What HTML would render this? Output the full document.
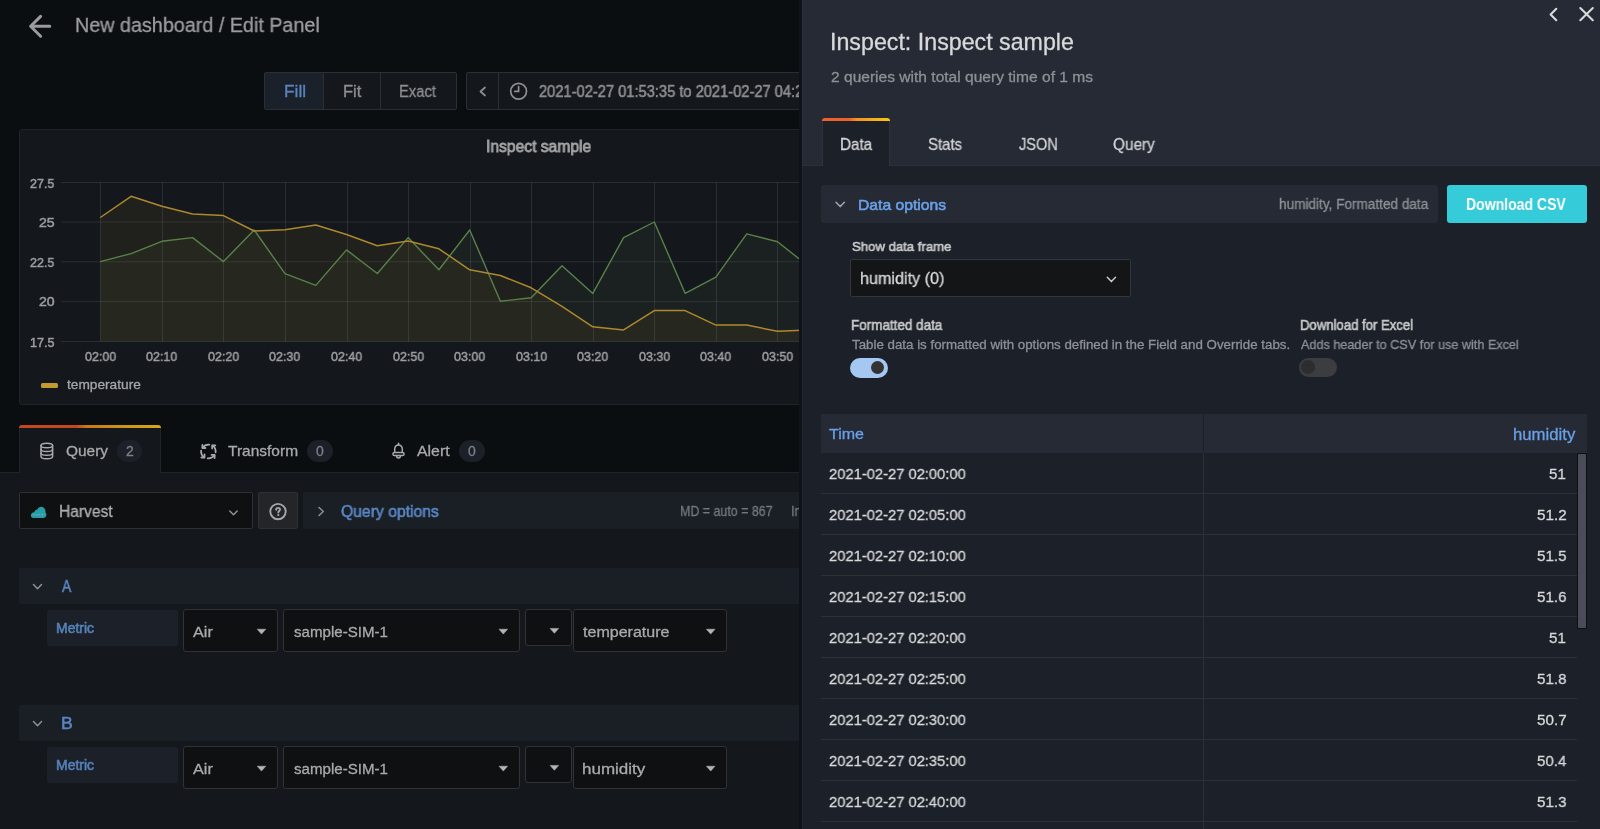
<!DOCTYPE html>
<html><head><meta charset="utf-8"><title>Inspect sample</title>
<style>
html,body{margin:0;padding:0;}
body{width:1600px;height:829px;overflow:hidden;position:relative;background:#0b0e11;font-family:"Liberation Sans",sans-serif;}
.b{position:absolute;}
.s{position:absolute;overflow:hidden;}
.t{position:absolute;white-space:pre;transform-origin:0 0;will-change:transform;}
#left{position:absolute;left:0;top:0;width:802px;height:829px;overflow:hidden;}
</style></head><body>
<div id="left">
<svg class="s" style="left:0;top:0" width="802" height="829" viewBox="0 0 802 829"><g fill="none" stroke="#9a9b9d" stroke-width="3" stroke-linecap="round" stroke-linejoin="round"><path d="M49.8 26.3H31M40.6 16.4L30.6 26.3L40.6 36.2"/></g></svg>
<div class="b" style="left:264px;top:72px;width:193px;height:38px;background:#14181c;border:1px solid #2b2e33;border-radius:2px;box-sizing:border-box;"></div>
<div class="b" style="left:265px;top:73px;width:58px;height:36px;background:#1b212b;border-radius:0px;"></div>
<div class="b" style="left:323px;top:73px;width:1px;height:36px;background:#2b2e33;border-radius:0px;"></div>
<div class="b" style="left:380px;top:73px;width:1px;height:36px;background:#2b2e33;border-radius:0px;"></div>
<div class="b" style="left:466px;top:72px;width:400px;height:38px;background:#14181c;border:1px solid #2b2e33;border-radius:2px;box-sizing:border-box;"></div>
<div class="b" style="left:498px;top:73px;width:1px;height:36px;background:#2b2e33;border-radius:0px;"></div>
<svg class="s" style="left:470px;top:80px" width="60" height="24" viewBox="470 80 60 24"><g fill="none" stroke="#8e8f92" stroke-width="1.7" stroke-linecap="round" stroke-linejoin="round"><path d="M485 87.5L480.5 91.5L485 95.5"/><circle cx="518.6" cy="91.2" r="7.9"/><path d="M518.6 86.6V91.4H514.8"/></g></svg>
<div class="b" style="left:19px;top:129px;width:900px;height:276px;background:#14181c;border:1px solid #202328;border-radius:3px;box-sizing:border-box;"></div>
<svg class="s" style="left:0;top:0" width="802" height="829" viewBox="0 0 802 829"><g stroke="rgba(240,250,255,0.10)" stroke-width="1"><path d="M61 182.5H802"/><path d="M61 222H802"/><path d="M61 261.8H802"/><path d="M61 301.6H802"/><path d="M61 341.5H802"/><path d="M100.5 182.5V341.5"/><path d="M162.5 182.5V341.5"/><path d="M223.5 182.5V341.5"/><path d="M285.5 182.5V341.5"/><path d="M347.5 182.5V341.5"/><path d="M408.5 182.5V341.5"/><path d="M470.5 182.5V341.5"/><path d="M531.5 182.5V341.5"/><path d="M593.5 182.5V341.5"/><path d="M654.5 182.5V341.5"/><path d="M716.5 182.5V341.5"/><path d="M777.5 182.5V341.5"/></g><path d="M100.3,341.5 L100.3,261.6 131.1,253.6 161.9,241.3 192.6,237.6 223.4,261.6 254.2,230.0 285.0,273.7 315.8,285.4 346.5,249.9 377.3,273.5 408.1,237.6 438.9,269.8 469.7,230.0 500.4,301.2 531.2,297.7 562.0,265.7 592.8,293.4 623.6,237.6 654.3,222.0 685.1,293.3 715.9,277.1 746.7,233.9 777.5,241.7 808.2,266.0 839.0,280.0 L839.0,341.5 Z" fill="rgb(120,150,90)" fill-opacity="0.07"/><path d="M100.3,341.5 L100.3,217.5 131.1,196.3 161.9,206.2 192.6,214.0 223.4,215.6 254.2,231.0 285.0,229.8 315.8,225.0 346.5,234.5 377.3,245.8 408.1,241.0 438.9,248.8 469.7,269.8 500.4,275.5 531.2,287.8 562.0,306.3 592.8,326.8 623.6,329.9 654.3,310.6 685.1,310.6 715.9,325.1 746.7,325.1 777.5,331.3 808.2,330.0 839.0,329.0 L839.0,341.5 Z" fill="rgb(190,140,40)" fill-opacity="0.075"/><polyline points="100.3,261.6 131.1,253.6 161.9,241.3 192.6,237.6 223.4,261.6 254.2,230.0 285.0,273.7 315.8,285.4 346.5,249.9 377.3,273.5 408.1,237.6 438.9,269.8 469.7,230.0 500.4,301.2 531.2,297.7 562.0,265.7 592.8,293.4 623.6,237.6 654.3,222.0 685.1,293.3 715.9,277.1 746.7,233.9 777.5,241.7 808.2,266.0 839.0,280.0" fill="none" stroke="#5a8049" stroke-width="1.4" stroke-linejoin="round"/><polyline points="100.3,217.5 131.1,196.3 161.9,206.2 192.6,214.0 223.4,215.6 254.2,231.0 285.0,229.8 315.8,225.0 346.5,234.5 377.3,245.8 408.1,241.0 438.9,248.8 469.7,269.8 500.4,275.5 531.2,287.8 562.0,306.3 592.8,326.8 623.6,329.9 654.3,310.6 685.1,310.6 715.9,325.1 746.7,325.1 777.5,331.3 808.2,330.0 839.0,329.0" fill="none" stroke="#ad882d" stroke-width="1.5" stroke-linejoin="round"/></svg>
<div class="b" style="left:41px;top:383px;width:17px;height:5px;background:#c39a2e;border-radius:1.5px;"></div>
<div class="b" style="left:0px;top:472px;width:802px;height:1px;background:#202328;border-radius:0px;"></div>
<div class="b" style="left:0px;top:473px;width:802px;height:356px;background:#14181c;border-radius:0px;"></div>
<div class="b" style="left:19px;top:425px;width:142px;height:48px;background:#14181c;border-radius:0px;border-left:1px solid #202328;border-right:1px solid #202328;box-sizing:border-box;border-radius:3px 3px 0 0;"></div>
<div class="b" style="left:19px;top:425px;width:142px;height:3px;background:transparent;border-radius:0px;background:linear-gradient(90deg,#c3481f 0%,#c3481f 40%,#c97a18 48%,#cc9416 72%,#d6a913 100%);border-radius:3px 3px 0 0;"></div>
<svg class="s" style="left:0;top:430px" width="420" height="40" viewBox="0 430 420 40"><g fill="none" stroke="#a8a9ab" stroke-width="1.5" stroke-linecap="round" stroke-linejoin="round"><ellipse cx="46.8" cy="445.5" rx="5.8" ry="2.3"/><path d="M41 445.5V456.5C41 457.8 43.6 458.8 46.8 458.8C50 458.8 52.6 457.8 52.6 456.5V445.5"/><path d="M41 449.2C41 450.5 43.6 451.5 46.8 451.5C50 451.5 52.6 450.5 52.6 449.2"/><path d="M41 452.9C41 454.2 43.6 455.2 46.8 455.2C50 455.2 52.6 454.2 52.6 452.9"/></g><g fill="none" stroke="#a8a9ab" stroke-width="1.8" stroke-linecap="round" stroke-linejoin="round"><path d="M209.3 444.6C206.3 444.4 204 445.6 202.6 447.6"/><path d="M202.4 444.9V448H205.4"/><path d="M215.6 452.3C215.8 449.3 214.6 447 212.6 445.6"/><path d="M215.3 445.4H212.2V448.4"/><path d="M207.7 458.3C210.7 458.5 213 457.3 214.4 455.3"/><path d="M214.6 458V454.9H211.6"/><path d="M201.1 450.6C200.9 453.6 202.1 455.9 204.1 457.3"/><path d="M201.4 457.5H204.5V454.5"/></g><g fill="none" stroke="#a8a9ab" stroke-width="1.5" stroke-linecap="round" stroke-linejoin="round"><path d="M394.7 452.3V449.2C394.7 446.7 396.4 444.9 398.5 444.9C400.6 444.9 402.3 446.7 402.3 449.2V452.3"/><rect x="393" y="452.4" width="11" height="3.2" rx="1.4"/><path d="M396.6 455.8C396.6 457 397.4 457.9 398.5 457.9C399.6 457.9 400.4 457 400.4 455.8"/><path d="M398.5 443.3V444.9"/></g></svg>
<div class="b" style="left:117px;top:440px;width:25px;height:22px;background:#1c2129;border-radius:11px;"></div>
<div class="b" style="left:307px;top:440px;width:26px;height:22px;background:#1c2129;border-radius:11px;"></div>
<div class="b" style="left:459px;top:440px;width:26px;height:22px;background:#1c2129;border-radius:11px;"></div>
<div class="b" style="left:19px;top:492px;width:234px;height:37px;background:#0f1011;border:1px solid #2e3033;border-radius:2px;box-sizing:border-box;"></div>
<div class="b" style="left:258px;top:492px;width:40px;height:37px;background:#242528;border:1px solid #2e3033;border-radius:2px;box-sizing:border-box;"></div>
<div class="b" style="left:303px;top:492px;width:520px;height:37px;background:#1a1f26;border-radius:2px;"></div>
<div class="b" style="left:19px;top:568px;width:800px;height:36px;background:#1a1f26;border-radius:2px;"></div>
<div class="b" style="left:47px;top:610px;width:131px;height:36px;background:#1b2029;border-radius:2px;"></div>
<div class="b" style="left:183px;top:609px;width:95px;height:43px;background:#0f1011;border:1px solid #303236;border-radius:3px;box-sizing:border-box;"></div>
<div class="b" style="left:283px;top:609px;width:237px;height:43px;background:#0f1011;border:1px solid #303236;border-radius:3px;box-sizing:border-box;"></div>
<div class="b" style="left:525px;top:609px;width:47px;height:37px;background:#0f1011;border:1px solid #303236;border-radius:3px;box-sizing:border-box;"></div>
<div class="b" style="left:573px;top:609px;width:154px;height:43px;background:#0f1011;border:1px solid #303236;border-radius:3px;box-sizing:border-box;"></div>
<div class="b" style="left:19px;top:705px;width:800px;height:36px;background:#1a1f26;border-radius:2px;"></div>
<div class="b" style="left:47px;top:747px;width:131px;height:36px;background:#1b2029;border-radius:2px;"></div>
<div class="b" style="left:183px;top:746px;width:95px;height:43px;background:#0f1011;border:1px solid #303236;border-radius:3px;box-sizing:border-box;"></div>
<div class="b" style="left:283px;top:746px;width:237px;height:43px;background:#0f1011;border:1px solid #303236;border-radius:3px;box-sizing:border-box;"></div>
<div class="b" style="left:525px;top:746px;width:47px;height:37px;background:#0f1011;border:1px solid #303236;border-radius:3px;box-sizing:border-box;"></div>
<div class="b" style="left:573px;top:746px;width:154px;height:43px;background:#0f1011;border:1px solid #303236;border-radius:3px;box-sizing:border-box;"></div>
<svg class="s" style="left:0;top:480px" width="802" height="349" viewBox="0 480 802 349"><path d="M33.3 518C31.8 518 30.9 516.9 30.9 515.5C30.9 513.7 32.3 512.3 34 512.3H34.3C34.6 510.6 35.8 509.5 37.3 509.4C38.1 507.7 39.6 506.7 41.2 506.7C43.7 506.7 45.5 508.8 45.5 511.4L45.4 512.3C46.1 512.9 46.4 513.7 46.4 514.6C46.4 516.5 45 518 43.2 518Z" fill="#2a9ca5"/><path d="M33 514.8H44.5" stroke="#78bfc4" stroke-width="0.9" stroke-dasharray="1.6 1.2"/><g fill="none" stroke="#8e8f92" stroke-width="1.5" stroke-linecap="round" stroke-linejoin="round"><path d="M229.8 511L233.5 514.7L237.2 511"/><path d="M319 507.5L323.3 511.5L319 515.5"/><path d="M33.5 584.5L37.5 588.8L41.5 584.5"/><path d="M33.5 721.5L37.5 725.8L41.5 721.5"/></g><g fill="none" stroke="#a5a6a8" stroke-width="1.9" stroke-linecap="round"><circle cx="278" cy="511.6" r="7.7"/><path d="M276.1 509.7C276.2 508.6 277 507.9 278.1 507.9C279.2 507.9 280 508.6 280 509.6C280 510.9 278.3 511 278.3 512.5"/></g><circle cx="278.3" cy="515" r="1.1" fill="#a5a6a8"/><path d="M257.2 629.2H265.8L261.5 634.1Z" fill="#b4b5b7" stroke="#b4b5b7" stroke-width="0.5" stroke-linejoin="round"/><path d="M499.0 629.2H507.6L503.3 634.1Z" fill="#b4b5b7" stroke="#b4b5b7" stroke-width="0.5" stroke-linejoin="round"/><path d="M550.1 628.4H558.6999999999999L554.4 633.3Z" fill="#b4b5b7" stroke="#b4b5b7" stroke-width="0.5" stroke-linejoin="round"/><path d="M706.4000000000001 629.2H715.0L710.7 634.1Z" fill="#b4b5b7" stroke="#b4b5b7" stroke-width="0.5" stroke-linejoin="round"/><path d="M257.2 766.2H265.8L261.5 771.1Z" fill="#b4b5b7" stroke="#b4b5b7" stroke-width="0.5" stroke-linejoin="round"/><path d="M499.0 766.2H507.6L503.3 771.1Z" fill="#b4b5b7" stroke="#b4b5b7" stroke-width="0.5" stroke-linejoin="round"/><path d="M550.1 765.4H558.6999999999999L554.4 770.3Z" fill="#b4b5b7" stroke="#b4b5b7" stroke-width="0.5" stroke-linejoin="round"/><path d="M706.4000000000001 766.2H715.0L710.7 771.1Z" fill="#b4b5b7" stroke="#b4b5b7" stroke-width="0.5" stroke-linejoin="round"/></svg>
<div class="t" style="left:75.22px;top:14.74px;font-size:20.00px;line-height:20.00px;color:#9c9d9f;-webkit-text-stroke:0.3px #9c9d9f;transform:scaleX(0.9874);">New dashboard / Edit Panel</div>
<div class="t" style="left:283.54px;top:83.87px;font-size:15.80px;line-height:15.80px;color:#5a84bd;-webkit-text-stroke:0.3px #5a84bd;transform:scaleX(1.0925);">Fill</div>
<div class="t" style="left:342.68px;top:83.87px;font-size:15.80px;line-height:15.80px;color:#8e8f92;-webkit-text-stroke:0.3px #8e8f92;transform:scaleX(1.0413);">Fit</div>
<div class="t" style="left:399.32px;top:83.87px;font-size:15.80px;line-height:15.80px;color:#8e8f92;-webkit-text-stroke:0.3px #8e8f92;transform:scaleX(0.9348);">Exact</div>
<div class="t" style="left:539.07px;top:83.89px;font-size:15.94px;line-height:15.94px;color:#8c8d90;-webkit-text-stroke:0.6px #8c8d90;transform:scaleX(0.9206);">2021-02-27 01:53:35 to 2021-02-27 04:25:20</div>
<div class="t" style="left:485.51px;top:138.90px;font-size:16.78px;line-height:16.78px;color:#a3a4a6;-webkit-text-stroke:0.8px #a3a4a6;transform:scaleX(0.9326);">Inspect sample</div>
<div class="t" style="left:30.18px;top:177.66px;font-size:12.59px;line-height:12.59px;color:#9d9ea1;-webkit-text-stroke:0.45px #9d9ea1;transform:scaleX(0.9908);">27.5</div>
<div class="t" style="left:38.79px;top:217.16px;font-size:12.59px;line-height:12.59px;color:#9d9ea1;-webkit-text-stroke:0.45px #9d9ea1;transform:scaleX(1.1226);">25</div>
<div class="t" style="left:30.18px;top:256.80px;font-size:12.59px;line-height:12.59px;color:#9d9ea1;-webkit-text-stroke:0.45px #9d9ea1;transform:scaleX(0.9908);">22.5</div>
<div class="t" style="left:38.79px;top:296.44px;font-size:12.59px;line-height:12.59px;color:#9d9ea1;-webkit-text-stroke:0.45px #9d9ea1;transform:scaleX(1.1226);">20</div>
<div class="t" style="left:29.92px;top:336.66px;font-size:12.59px;line-height:12.59px;color:#9d9ea1;-webkit-text-stroke:0.45px #9d9ea1;">17.5</div>
<div class="t" style="left:84.73px;top:351.44px;font-size:12.59px;line-height:12.59px;color:#9d9ea1;-webkit-text-stroke:0.45px #9d9ea1;transform:scaleX(0.9913);">02:00</div>
<div class="t" style="left:146.29px;top:351.44px;font-size:12.59px;line-height:12.59px;color:#9d9ea1;-webkit-text-stroke:0.45px #9d9ea1;transform:scaleX(0.9913);">02:10</div>
<div class="t" style="left:207.85px;top:351.44px;font-size:12.59px;line-height:12.59px;color:#9d9ea1;-webkit-text-stroke:0.45px #9d9ea1;transform:scaleX(0.9913);">02:20</div>
<div class="t" style="left:269.41px;top:351.44px;font-size:12.59px;line-height:12.59px;color:#9d9ea1;-webkit-text-stroke:0.45px #9d9ea1;transform:scaleX(0.9913);">02:30</div>
<div class="t" style="left:330.97px;top:351.44px;font-size:12.59px;line-height:12.59px;color:#9d9ea1;-webkit-text-stroke:0.45px #9d9ea1;transform:scaleX(0.9913);">02:40</div>
<div class="t" style="left:392.53px;top:351.44px;font-size:12.59px;line-height:12.59px;color:#9d9ea1;-webkit-text-stroke:0.45px #9d9ea1;transform:scaleX(0.9913);">02:50</div>
<div class="t" style="left:454.09px;top:351.44px;font-size:12.59px;line-height:12.59px;color:#9d9ea1;-webkit-text-stroke:0.45px #9d9ea1;transform:scaleX(0.9913);">03:00</div>
<div class="t" style="left:515.65px;top:351.44px;font-size:12.59px;line-height:12.59px;color:#9d9ea1;-webkit-text-stroke:0.45px #9d9ea1;transform:scaleX(0.9913);">03:10</div>
<div class="t" style="left:577.21px;top:351.44px;font-size:12.59px;line-height:12.59px;color:#9d9ea1;-webkit-text-stroke:0.45px #9d9ea1;transform:scaleX(0.9913);">03:20</div>
<div class="t" style="left:638.77px;top:351.44px;font-size:12.59px;line-height:12.59px;color:#9d9ea1;-webkit-text-stroke:0.45px #9d9ea1;transform:scaleX(0.9913);">03:30</div>
<div class="t" style="left:700.33px;top:351.44px;font-size:12.59px;line-height:12.59px;color:#9d9ea1;-webkit-text-stroke:0.45px #9d9ea1;transform:scaleX(0.9913);">03:40</div>
<div class="t" style="left:761.89px;top:351.44px;font-size:12.59px;line-height:12.59px;color:#9d9ea1;-webkit-text-stroke:0.45px #9d9ea1;transform:scaleX(0.9913);">03:50</div>
<div class="t" style="left:67.28px;top:378.19px;font-size:13.60px;line-height:13.60px;color:#a5a6a8;-webkit-text-stroke:0.3px #a5a6a8;transform:scaleX(1.0069);">temperature</div>
<div class="t" style="left:66.18px;top:443.00px;font-size:15.38px;line-height:15.38px;color:#a8a9ab;-webkit-text-stroke:0.3px #a8a9ab;transform:scaleX(1.0054);">Query</div>
<div class="t" style="left:125.58px;top:444.38px;font-size:13.99px;line-height:13.99px;color:#7d7f83;-webkit-text-stroke:0.3px #7d7f83;">2</div>
<div class="t" style="left:227.65px;top:443.00px;font-size:15.38px;line-height:15.38px;color:#a8a9ab;-webkit-text-stroke:0.3px #a8a9ab;transform:scaleX(1.0081);">Transform</div>
<div class="t" style="left:316.15px;top:444.38px;font-size:13.99px;line-height:13.99px;color:#7d7f83;-webkit-text-stroke:0.3px #7d7f83;">0</div>
<div class="t" style="left:417.00px;top:443.00px;font-size:15.38px;line-height:15.38px;color:#a8a9ab;-webkit-text-stroke:0.3px #a8a9ab;transform:scaleX(1.0326);">Alert</div>
<div class="t" style="left:468.15px;top:444.38px;font-size:13.99px;line-height:13.99px;color:#7d7f83;-webkit-text-stroke:0.3px #7d7f83;">0</div>
<div class="t" style="left:59.21px;top:502.71px;font-size:16.22px;line-height:16.22px;color:#aeafb1;-webkit-text-stroke:0.3px #aeafb1;transform:scaleX(0.9610);">Harvest</div>
<div class="t" style="left:340.67px;top:503.43px;font-size:16.22px;line-height:16.22px;color:#5a86c2;-webkit-text-stroke:0.6px #5a86c2;transform:scaleX(0.9693);">Query options</div>
<div class="t" style="left:680.01px;top:505.22px;font-size:13.71px;line-height:13.71px;color:#75787d;-webkit-text-stroke:0.3px #75787d;transform:scaleX(0.9066);">MD = auto = 867</div>
<div class="t" style="left:790.77px;top:505.22px;font-size:13.71px;line-height:13.71px;color:#75787d;-webkit-text-stroke:0.3px #75787d;transform:scaleX(0.93);">Interval = 2s</div>
<div class="t" style="left:62.00px;top:578.87px;font-size:15.80px;line-height:15.80px;color:#5a86c2;-webkit-text-stroke:0.5px #5a86c2;transform:scaleX(0.8736);">A</div>
<div class="t" style="left:55.76px;top:621.98px;font-size:13.85px;line-height:13.85px;color:#5580b8;-webkit-text-stroke:0.6px #5580b8;transform:scaleX(1.0108);">Metric</div>
<div class="t" style="left:193.08px;top:624.59px;font-size:14.69px;line-height:14.69px;color:#a9aaac;-webkit-text-stroke:0.3px #a9aaac;transform:scaleX(1.1038);">Air</div>
<div class="t" style="left:294.04px;top:624.59px;font-size:14.69px;line-height:14.69px;color:#a9aaac;-webkit-text-stroke:0.3px #a9aaac;transform:scaleX(1.0274);">sample-SIM-1</div>
<div class="t" style="left:582.88px;top:624.16px;font-size:15.20px;line-height:15.20px;color:#a9aaac;-webkit-text-stroke:0.3px #a9aaac;transform:scaleX(1.0560);">temperature</div>
<div class="t" style="left:60.59px;top:715.87px;font-size:15.80px;line-height:15.80px;color:#5a86c2;-webkit-text-stroke:0.5px #5a86c2;transform:scaleX(1.1132);">B</div>
<div class="t" style="left:55.76px;top:758.98px;font-size:13.85px;line-height:13.85px;color:#5580b8;-webkit-text-stroke:0.6px #5580b8;transform:scaleX(1.0108);">Metric</div>
<div class="t" style="left:193.08px;top:761.59px;font-size:14.69px;line-height:14.69px;color:#a9aaac;-webkit-text-stroke:0.3px #a9aaac;transform:scaleX(1.1038);">Air</div>
<div class="t" style="left:294.04px;top:761.59px;font-size:14.69px;line-height:14.69px;color:#a9aaac;-webkit-text-stroke:0.3px #a9aaac;transform:scaleX(1.0274);">sample-SIM-1</div>
<div class="t" style="left:582.02px;top:761.16px;font-size:15.20px;line-height:15.20px;color:#a9aaac;-webkit-text-stroke:0.3px #a9aaac;transform:scaleX(1.1187);">humidity</div>
</div>
<div class="b" style="left:799px;top:0px;width:3px;height:829px;background:#0f121a;border-radius:0px;"></div>
<div class="b" style="left:802px;top:0px;width:798px;height:829px;background:#1c2129;border-radius:0px;"></div>
<div class="b" style="left:802px;top:0px;width:798px;height:165px;background:#252a35;border-radius:0px;"></div>
<div class="b" style="left:802px;top:165px;width:798px;height:1px;background:#2b2f37;border-radius:0px;"></div>
<div class="b" style="left:802px;top:0px;width:1px;height:829px;background:rgba(255,255,255,0.025);border-radius:0px;"></div>
<svg class="s" style="left:1540px;top:0" width="60" height="30" viewBox="1540 0 60 30"><g fill="none" stroke="#d8d9da" stroke-width="2.1" stroke-linecap="round" stroke-linejoin="round"><path d="M1556.3 8.8L1550.6 14.5L1556.3 20.2"/><path d="M1580.3 8.1L1592.8 20.2M1592.8 8.1L1580.3 20.2"/></g></svg>
<div class="b" style="left:822px;top:118px;width:68px;height:48px;background:#1c2129;border-radius:0px;border-left:1px solid #30333a;border-right:1px solid #30333a;box-sizing:border-box;border-radius:3px 3px 0 0;"></div>
<div class="b" style="left:822px;top:118px;width:68px;height:3px;background:transparent;border-radius:0px;background:linear-gradient(90deg,#f0602a 0%,#f0602a 40%,#f5901f 50%,#f8a81a 72%,#fbc70c 100%);border-radius:3px 3px 0 0;"></div>
<div class="b" style="left:821px;top:185px;width:617px;height:38px;background:#252a35;border-radius:3px;"></div>
<svg class="s" style="left:830px;top:195px" width="20" height="20" viewBox="830 195 20 20"><path d="M836 202.3L840.2 206.6L844.4 202.3" fill="none" stroke="#a5a6a8" stroke-width="1.5" stroke-linecap="round" stroke-linejoin="round"/></svg>
<div class="b" style="left:1447px;top:185px;width:140px;height:38px;background:#35cbd9;border-radius:3px;"></div>
<div class="b" style="left:850px;top:259px;width:281px;height:38px;background:#141517;border:1px solid #33363a;border-radius:2px;box-sizing:border-box;"></div>
<svg class="s" style="left:1100px;top:270px" width="24" height="20" viewBox="1100 270 24 20"><path d="M1107.3 277.3L1111.4 281.6L1115.5 277.3" fill="none" stroke="#c8c9cb" stroke-width="1.5" stroke-linecap="round" stroke-linejoin="round"/></svg>
<div class="b" style="left:849.5px;top:358px;width:38px;height:19.5px;background:#a5c8f2;border-radius:10px;"></div>
<div class="b" style="left:871px;top:360.7px;width:13px;height:13px;background:#333333;border-radius:7px;"></div>
<div class="b" style="left:1299px;top:358px;width:38px;height:19px;background:#3c3d40;border-radius:10px;"></div>
<div class="b" style="left:1301.3px;top:360.3px;width:14px;height:14px;background:#2c2d2f;border-radius:7px;"></div>
<div class="b" style="left:821px;top:414px;width:766px;height:39px;background:#252a35;border-radius:0px;"></div>
<div class="b" style="left:1203px;top:414px;width:1px;height:39px;background:#1c2129;border-radius:0px;"></div>
<div class="b" style="left:1203px;top:453px;width:1px;height:376px;background:#2e3034;border-radius:0px;"></div>
<div class="b" style="left:821px;top:493px;width:756px;height:1px;background:#2e3034;border-radius:0px;"></div>
<div class="b" style="left:821px;top:534px;width:756px;height:1px;background:#2e3034;border-radius:0px;"></div>
<div class="b" style="left:821px;top:575px;width:756px;height:1px;background:#2e3034;border-radius:0px;"></div>
<div class="b" style="left:821px;top:616px;width:756px;height:1px;background:#2e3034;border-radius:0px;"></div>
<div class="b" style="left:821px;top:657px;width:756px;height:1px;background:#2e3034;border-radius:0px;"></div>
<div class="b" style="left:821px;top:698px;width:756px;height:1px;background:#2e3034;border-radius:0px;"></div>
<div class="b" style="left:821px;top:739px;width:756px;height:1px;background:#2e3034;border-radius:0px;"></div>
<div class="b" style="left:821px;top:780px;width:756px;height:1px;background:#2e3034;border-radius:0px;"></div>
<div class="b" style="left:821px;top:821px;width:756px;height:1px;background:#2e3034;border-radius:0px;"></div>
<div class="b" style="left:1577px;top:453px;width:10px;height:176px;background:#0e0f11;border-radius:2px;"></div>
<div class="b" style="left:1578px;top:454px;width:8px;height:174px;background:#4a4c58;border-radius:1px;"></div>
<div class="t" style="left:829.79px;top:31.46px;font-size:23.22px;line-height:23.22px;color:#d8d9da;-webkit-text-stroke:0.3px #d8d9da;">Inspect: Inspect sample</div>
<div class="t" style="left:830.84px;top:70.45px;font-size:14.69px;line-height:14.69px;color:#8e9094;-webkit-text-stroke:0.3px #8e9094;transform:scaleX(1.0592);">2 queries with total query time of 1 ms</div>
<div class="t" style="left:839.62px;top:136.76px;font-size:15.66px;line-height:15.66px;color:#d8d9da;-webkit-text-stroke:0.3px #d8d9da;transform:scaleX(0.9751);">Data</div>
<div class="t" style="left:927.52px;top:136.76px;font-size:15.66px;line-height:15.66px;color:#d0d1d3;-webkit-text-stroke:0.3px #d0d1d3;transform:scaleX(0.9567);">Stats</div>
<div class="t" style="left:1018.77px;top:136.76px;font-size:15.66px;line-height:15.66px;color:#d0d1d3;-webkit-text-stroke:0.3px #d0d1d3;transform:scaleX(0.9286);">JSON</div>
<div class="t" style="left:1112.81px;top:136.76px;font-size:15.66px;line-height:15.66px;color:#d0d1d3;-webkit-text-stroke:0.3px #d0d1d3;transform:scaleX(0.9803);">Query</div>
<div class="t" style="left:858.24px;top:197.00px;font-size:15.38px;line-height:15.38px;color:#6aa0e6;-webkit-text-stroke:0.6px #6aa0e6;transform:scaleX(1.0214);">Data options</div>
<div class="t" style="left:1278.64px;top:197.52px;font-size:13.85px;line-height:13.85px;color:#8e9096;-webkit-text-stroke:0.3px #8e9096;transform:scaleX(0.9812);">humidity, Formatted data</div>
<div class="t" style="left:1466.28px;top:196.11px;font-size:16.08px;line-height:16.08px;color:#ffffff;font-weight:bold;transform:scaleX(0.8725);">Download CSV</div>
<div class="t" style="left:852.31px;top:239.62px;font-size:13.57px;line-height:13.57px;color:#c8c9cb;-webkit-text-stroke:0.6px #c8c9cb;transform:scaleX(0.9692);">Show data frame</div>
<div class="t" style="left:859.95px;top:271.49px;font-size:16.60px;line-height:16.60px;color:#d8d9da;-webkit-text-stroke:0.3px #d8d9da;transform:scaleX(0.9725);">humidity (0)</div>
<div class="t" style="left:850.96px;top:317.68px;font-size:13.99px;line-height:13.99px;color:#c8c9cb;-webkit-text-stroke:0.6px #c8c9cb;transform:scaleX(0.9629);">Formatted data</div>
<div class="t" style="left:851.73px;top:339.29px;font-size:12.87px;line-height:12.87px;color:#8e9096;-webkit-text-stroke:0.3px #8e9096;transform:scaleX(1.0354);">Table data is formatted with options defined in the Field and Override tabs.</div>
<div class="t" style="left:1300.49px;top:317.68px;font-size:13.99px;line-height:13.99px;color:#c8c9cb;-webkit-text-stroke:0.6px #c8c9cb;transform:scaleX(0.9392);">Download for Excel</div>
<div class="t" style="left:1301.04px;top:339.07px;font-size:12.87px;line-height:12.87px;color:#8e9096;-webkit-text-stroke:0.3px #8e9096;transform:scaleX(0.9827);">Adds header to CSV for use with Excel</div>
<div class="t" style="left:829.06px;top:426.04px;font-size:15.24px;line-height:15.24px;color:#6aa0e6;-webkit-text-stroke:0.3px #6aa0e6;transform:scaleX(1.0507);">Time</div>
<div class="t" style="left:1512.54px;top:426.54px;font-size:15.60px;line-height:15.60px;color:#6aa0e6;-webkit-text-stroke:0.3px #6aa0e6;transform:scaleX(1.0726);">humidity</div>
<div class="t" style="left:828.64px;top:465.54px;font-size:15.24px;line-height:15.24px;color:#d8d9da;-webkit-text-stroke:0.3px #d8d9da;transform:scaleX(0.9669);">2021-02-27 02:00:00</div>
<div class="t" style="left:1549.10px;top:465.54px;font-size:15.24px;line-height:15.24px;color:#d8d9da;-webkit-text-stroke:0.3px #d8d9da;transform:scaleX(0.9908);">51</div>
<div class="t" style="left:828.88px;top:506.54px;font-size:15.24px;line-height:15.24px;color:#d8d9da;-webkit-text-stroke:0.3px #d8d9da;transform:scaleX(0.9669);">2021-02-27 02:05:00</div>
<div class="t" style="left:1537.09px;top:506.54px;font-size:15.24px;line-height:15.24px;color:#d8d9da;-webkit-text-stroke:0.3px #d8d9da;">51.2</div>
<div class="t" style="left:828.64px;top:547.54px;font-size:15.24px;line-height:15.24px;color:#d8d9da;-webkit-text-stroke:0.3px #d8d9da;transform:scaleX(0.9669);">2021-02-27 02:10:00</div>
<div class="t" style="left:1537.09px;top:547.54px;font-size:15.24px;line-height:15.24px;color:#d8d9da;-webkit-text-stroke:0.3px #d8d9da;transform:scaleX(0.9926);">51.5</div>
<div class="t" style="left:828.64px;top:588.54px;font-size:15.24px;line-height:15.24px;color:#d8d9da;-webkit-text-stroke:0.3px #d8d9da;transform:scaleX(0.9669);">2021-02-27 02:15:00</div>
<div class="t" style="left:1537.09px;top:588.54px;font-size:15.24px;line-height:15.24px;color:#d8d9da;-webkit-text-stroke:0.3px #d8d9da;transform:scaleX(0.9926);">51.6</div>
<div class="t" style="left:828.64px;top:629.54px;font-size:15.24px;line-height:15.24px;color:#d8d9da;-webkit-text-stroke:0.3px #d8d9da;transform:scaleX(0.9669);">2021-02-27 02:20:00</div>
<div class="t" style="left:1549.10px;top:629.54px;font-size:15.24px;line-height:15.24px;color:#d8d9da;-webkit-text-stroke:0.3px #d8d9da;transform:scaleX(0.9908);">51</div>
<div class="t" style="left:828.64px;top:670.54px;font-size:15.24px;line-height:15.24px;color:#d8d9da;-webkit-text-stroke:0.3px #d8d9da;transform:scaleX(0.9669);">2021-02-27 02:25:00</div>
<div class="t" style="left:1537.09px;top:670.54px;font-size:15.24px;line-height:15.24px;color:#d8d9da;-webkit-text-stroke:0.3px #d8d9da;transform:scaleX(0.9926);">51.8</div>
<div class="t" style="left:828.64px;top:711.54px;font-size:15.24px;line-height:15.24px;color:#d8d9da;-webkit-text-stroke:0.3px #d8d9da;transform:scaleX(0.9669);">2021-02-27 02:30:00</div>
<div class="t" style="left:1537.09px;top:711.54px;font-size:15.24px;line-height:15.24px;color:#d8d9da;-webkit-text-stroke:0.3px #d8d9da;">50.7</div>
<div class="t" style="left:828.64px;top:752.54px;font-size:15.24px;line-height:15.24px;color:#d8d9da;-webkit-text-stroke:0.3px #d8d9da;transform:scaleX(0.9669);">2021-02-27 02:35:00</div>
<div class="t" style="left:1537.10px;top:752.54px;font-size:15.24px;line-height:15.24px;color:#d8d9da;-webkit-text-stroke:0.3px #d8d9da;transform:scaleX(0.9874);">50.4</div>
<div class="t" style="left:828.64px;top:793.54px;font-size:15.24px;line-height:15.24px;color:#d8d9da;-webkit-text-stroke:0.3px #d8d9da;transform:scaleX(0.9669);">2021-02-27 02:40:00</div>
<div class="t" style="left:1537.09px;top:793.54px;font-size:15.24px;line-height:15.24px;color:#d8d9da;-webkit-text-stroke:0.3px #d8d9da;transform:scaleX(0.9926);">51.3</div>
</body></html>
